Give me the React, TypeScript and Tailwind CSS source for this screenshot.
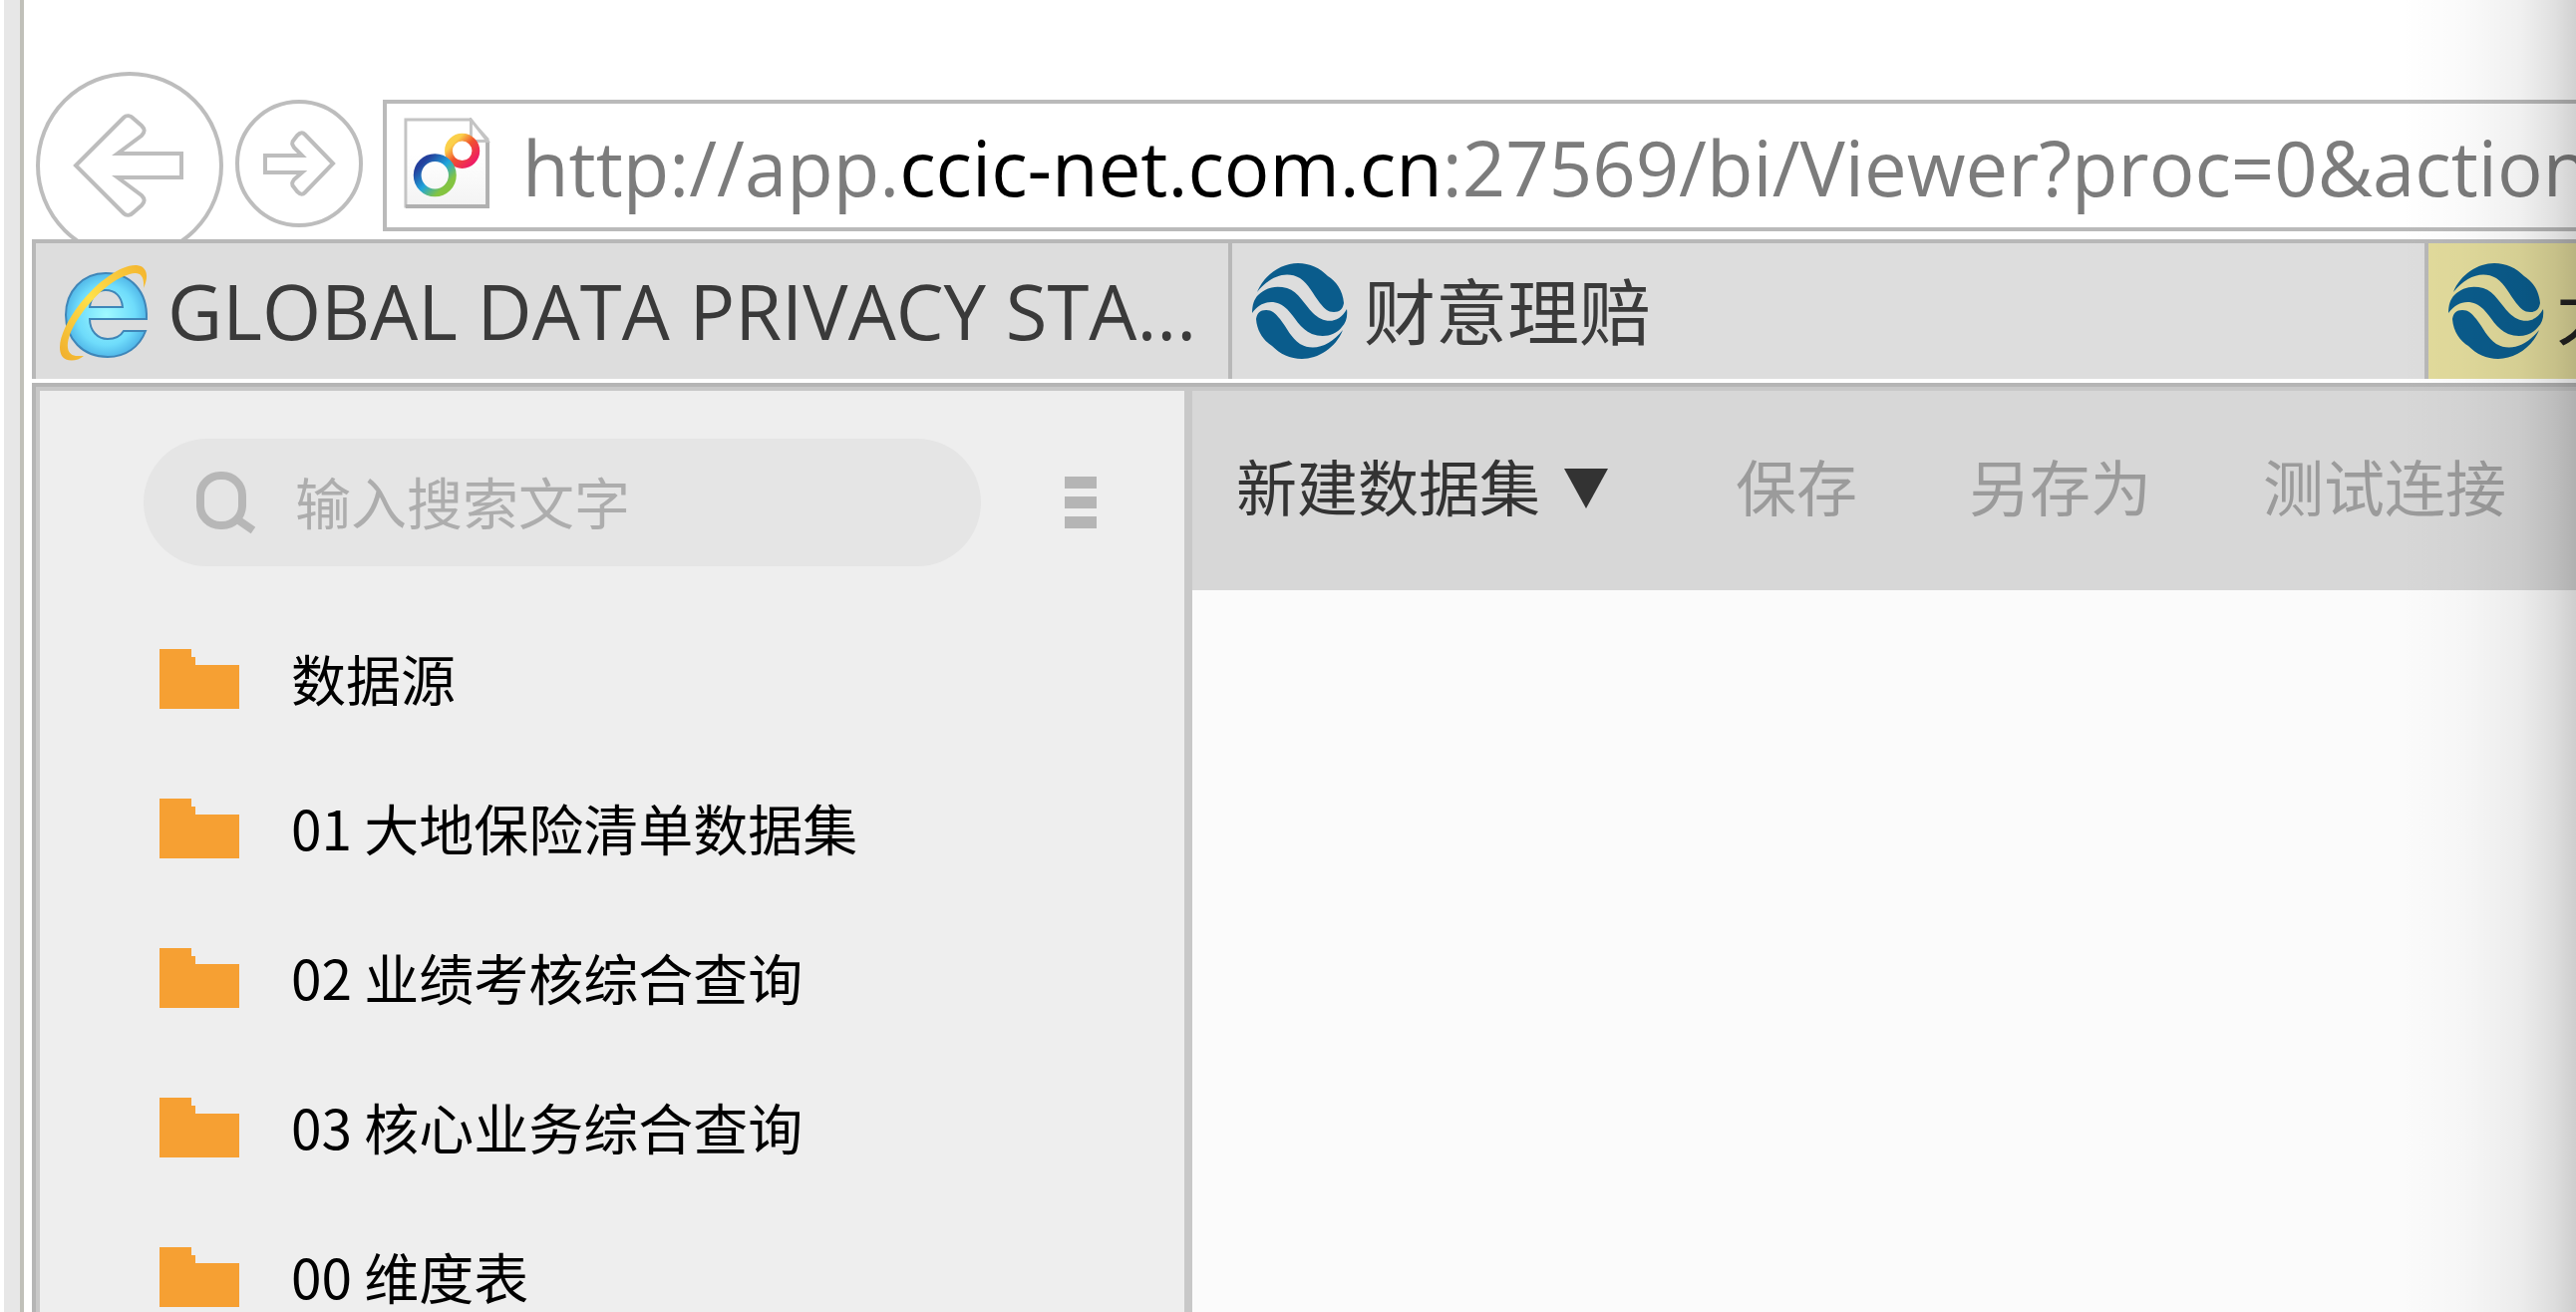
import React from "react";

const folders = [
  "数据源",
  "01 大地保险清单数据集",
  "02 业绩考核综合查询",
  "03 核心业务综合查询",
  "00 维度表",
];

function GlobeLogo() {
  return (
    <svg viewBox="0 0 96 96" className="size-24 shrink-0" aria-hidden="true">
      <g fill="#0a5c8c">
        <path d="M5 29C12 11 30 0 46 0c12 0 22 5 30 13 8 5 15 14 16 27-1 6-4 9-10 9-6 0-9-3-14-9-7-9-11-19-20-25-14-8-30-2-43 14Z" />
        <path d="M0 50C0 42 2 36 6 32c8-8 18-10 29-7 12 4 17 16 26 25 11 11 26 11 34-4 1 8-1 14-5 18-7 9-19 11-30 7-12-5-17-17-25-25C25 36 10 36 0 50Z" />
        <path d="M91 67C84 85 66 96 50 96c-12 0-22-5-30-13C12 78 5 69 4 56c1-6 4-9 10-9 6 0 9 3 14 9 7 9 11 19 20 25 14 8 30 2 43-14Z" />
      </g>
    </svg>
  );
}

function IeLogo() {
  return (
    <svg viewBox="0 0 96 100" className="h-25 w-24 shrink-0" aria-hidden="true">
      <defs>
        <radialGradient id="ie-e" cx="0.5" cy="0.5" r="0.6">
          <stop offset="0" stopColor="#a0faff" />
          <stop offset="0.6" stopColor="#6fdcfb" />
          <stop offset="1" stopColor="#3d9fdc" />
        </radialGradient>
        <linearGradient id="ie-ring" x1="1" y1="0" x2="0" y2="1">
          <stop offset="0" stopColor="#f3b32e" />
          <stop offset="0.5" stopColor="#ffe14a" />
          <stop offset="1" stopColor="#f0ad2c" />
        </linearGradient>
      </defs>
      <path
        fill="url(#ie-e)"
        stroke="#3f86b8"
        strokeWidth="2"
        fillRule="evenodd"
        d="M91 58H34c0 12 8 20 18 20 8 0 13-3 16-8h22C84 86 70 96 52 96 27 96 10 78 10 54 10 30 27 12 50 12c25 0 42 18 41 46ZM34 46h33c-1-11-8-17-17-17-8 0-15 7-16 17Z"
      />
      <path
        fill="url(#ie-ring)"
        d="M88 27C89 14 84 10 74 13 52 19 26 47 15 71c-6 15-3 23 5 24l8 0c-7 6-18 6-22 0C0 84 8 64 24 43 42 20 66 3 81 4c10 1 13 10 7 23Z"
      />
    </svg>
  );
}

function PageIcon() {
  return (
    <svg viewBox="0 0 90 96" className="h-24 w-22 shrink-0" aria-hidden="true">
      <defs>
        <linearGradient id="ring-warm" x1="0" y1="0" x2="1" y2="1">
          <stop offset="0.2" stopColor="#fbd04a" />
          <stop offset="0.5" stopColor="#f0522d" />
          <stop offset="0.9" stopColor="#ee1e63" />
        </linearGradient>
        <linearGradient id="ring-cool" x1="0" y1="0" x2="1" y2="1">
          <stop offset="0.15" stopColor="#233f9c" />
          <stop offset="0.5" stopColor="#1fa5dc" />
          <stop offset="0.8" stopColor="#84c441" />
        </linearGradient>
        <linearGradient id="sheet" x1="0" y1="0" x2="0" y2="1">
          <stop offset="0.4" stopColor="#ffffff" />
          <stop offset="1" stopColor="#f3f3f3" />
        </linearGradient>
      </defs>
      <path d="M3 1h66l18 20v69H3Z" fill="url(#sheet)" stroke="#c4c4c4" strokeWidth="3" />
      <path d="M3 90h84V23" fill="none" stroke="#b0b0b0" strokeWidth="4" />
      <path d="M70 1v22h17Z" fill="#fff" stroke="#c4c4c4" strokeWidth="3" />
      <circle cx="61" cy="33" r="14" fill="#fff" stroke="url(#ring-warm)" strokeWidth="8" />
      <circle cx="33" cy="58" r="18" fill="none" stroke="url(#ring-cool)" strokeWidth="8" />
    </svg>
  );
}

function BackIcon() {
  return (
    <svg viewBox="0 0 188 188" className="size-47" fill="none" stroke="#bdbdbd" strokeWidth="4" aria-hidden="true">
      <circle cx="94" cy="94" r="92" />
      <path d="M40 94 88 46c3-3 7-2 10 1l8 7c4 4 3 7 0 10L82 82h64v24H82l24 18c3 3 4 6 0 10l-8 7c-3 3-7 4-10 1Z" />
    </svg>
  );
}

function ForwardIcon() {
  return (
    <svg viewBox="0 0 128 128" className="size-32" fill="none" stroke="#bdbdbd" strokeWidth="4" aria-hidden="true">
      <circle cx="64" cy="64" r="62" />
      <path d="M98 64 70 35c-3-3-5-2-8 1l-3 4c-3 3-2 5 0 8l8 8H30v17h37l-8 7c-2 3-3 5 0 8l3 4c3 3 5 4 8 1Z" />
    </svg>
  );
}

function FolderIcon() {
  return (
    <svg viewBox="0 0 80 60" className="h-15 w-20 shrink-0" aria-hidden="true">
      <path d="M0 0h32v8h4v8h44v44H0Z" fill="#f6a033" />
    </svg>
  );
}

export default function App() {
  return (
    <div className="relative flex h-screen overflow-hidden bg-white pl-1 font-['Open_Sans','Noto_Sans_CJK_SC',sans-serif]">
      <div className="w-5 shrink-0 border-r-4 border-[#c0c0b9] bg-[#e7e7e7]" />
      <div className="flex min-w-0 flex-1 flex-col pl-2">
        <header className="flex h-60 shrink-0 items-start gap-3 overflow-hidden pt-18 pl-1">
          <button type="button" aria-label="Back" className="shrink-0">
            <BackIcon />
          </button>
          <button type="button" aria-label="Forward" className="mt-7 shrink-0">
            <ForwardIcon />
          </button>
          <div className="mt-7 ml-2 flex h-33 min-w-0 flex-1 items-center gap-8 border-4 border-r-0 border-[#bababa] pl-4">
            <PageIcon />
            <a href="#viewer" className="pt-1 text-[76px] leading-none whitespace-nowrap text-[#7c7c7c]">
              http://app.<span className="text-black">ccic-net.com.cn</span>:27569/bi/Viewer?proc=0&amp;action
            </a>
          </div>
        </header>

        <nav className="flex h-35 shrink-0 overflow-hidden border-t-4 border-l-4 border-[#b8b8b8] bg-[#dddddd] text-[72px] text-[#3a3a3a]">
          <button type="button" className="flex w-300 shrink-0 items-center gap-4 border-r-4 border-[#b8b8b8] pl-5 text-left text-[76px] leading-none whitespace-nowrap">
            <IeLogo />
            GLOBAL DATA PRIVACY STA...
          </button>
          <button type="button" className="flex w-300 shrink-0 items-center gap-4 border-r-4 border-[#b8b8b8] pl-5 text-left whitespace-nowrap">
            <GlobeLogo />
            财意理赔
          </button>
          <button type="button" className="flex flex-1 items-center gap-3 bg-[#e2db9c] pl-5 text-left whitespace-nowrap text-[#222222]">
            <GlobeLogo />
            大
          </button>
        </nav>

        <div className="mt-1 flex min-h-0 flex-1 border-t-4 border-l-4 border-[#b5b5b5]">
          <div className="flex min-w-0 flex-1 border-t-4 border-l-4 border-[#c8c8c8]">
            <aside className="w-289 shrink-0 overflow-hidden border-r-8 border-[#c8c8c8] bg-[#eeeeee]">
              <div className="flex items-center pt-12 pl-26">
                <label className="flex h-32 w-210 items-center gap-10 rounded-full bg-[#e5e5e5] pl-13">
                  <svg viewBox="0 0 60 62" className="h-16 w-15 shrink-0" fill="none" stroke="#b7b7b7" strokeWidth="8" aria-hidden="true">
                    <rect x="5" y="4" width="42" height="50" rx="20" />
                    <path d="m42 48 16 11" />
                  </svg>
                  <input
                    type="text"
                    aria-label="输入搜索文字"
                    placeholder="输入搜索文字"
                    className="w-120 bg-transparent text-[56px] outline-none placeholder:text-[#adadad]"
                  />
                </label>
                <button type="button" aria-label="菜单" className="ml-21 flex w-8 flex-col gap-2">
                  <span className="h-3 bg-[#b5b5b5]" />
                  <span className="h-3 bg-[#b5b5b5]" />
                  <span className="h-3 bg-[#b5b5b5]" />
                </button>
              </div>
              <ul className="pt-[38px]">
                {folders.map((name) => (
                  <li key={name}>
                    <button
                      type="button"
                      className="flex h-[150px] w-full items-center gap-13 pl-30 text-left font-['Noto_Sans_CJK_SC',sans-serif] text-[55px] leading-none whitespace-nowrap text-black"
                    >
                      <FolderIcon />
                      <span className="pb-1">{name}</span>
                    </button>
                  </li>
                ))}
              </ul>
            </aside>
            <main className="flex min-w-0 flex-1 flex-col bg-[#fbfbfb]">
              <div className="flex h-50 shrink-0 items-center bg-[#d7d7d7] pb-1 pl-11 text-[61px] whitespace-nowrap text-[#9b9b9b]">
                <button type="button" className="flex items-center gap-6 text-[#333333]">
                  新建数据集
                  <svg viewBox="0 0 44 40" className="h-10 w-11" aria-hidden="true">
                    <path d="M0 0h44L22 40Z" fill="#333333" />
                  </svg>
                </button>
                <button type="button" className="ml-32">保存</button>
                <button type="button" className="ml-28">另存为</button>
                <button type="button" className="ml-28">测试连接</button>
              </div>
            </main>
          </div>
        </div>
      </div>
      <div className="pointer-events-none absolute inset-y-0 right-0 w-44 bg-[linear-gradient(to_right,transparent,rgba(0,0,0,0.02)_35%,rgba(0,0,0,0.06)_68%,rgba(0,0,0,0.12)_88%,rgba(0,0,0,0.18))]" />
    </div>
  );
}
